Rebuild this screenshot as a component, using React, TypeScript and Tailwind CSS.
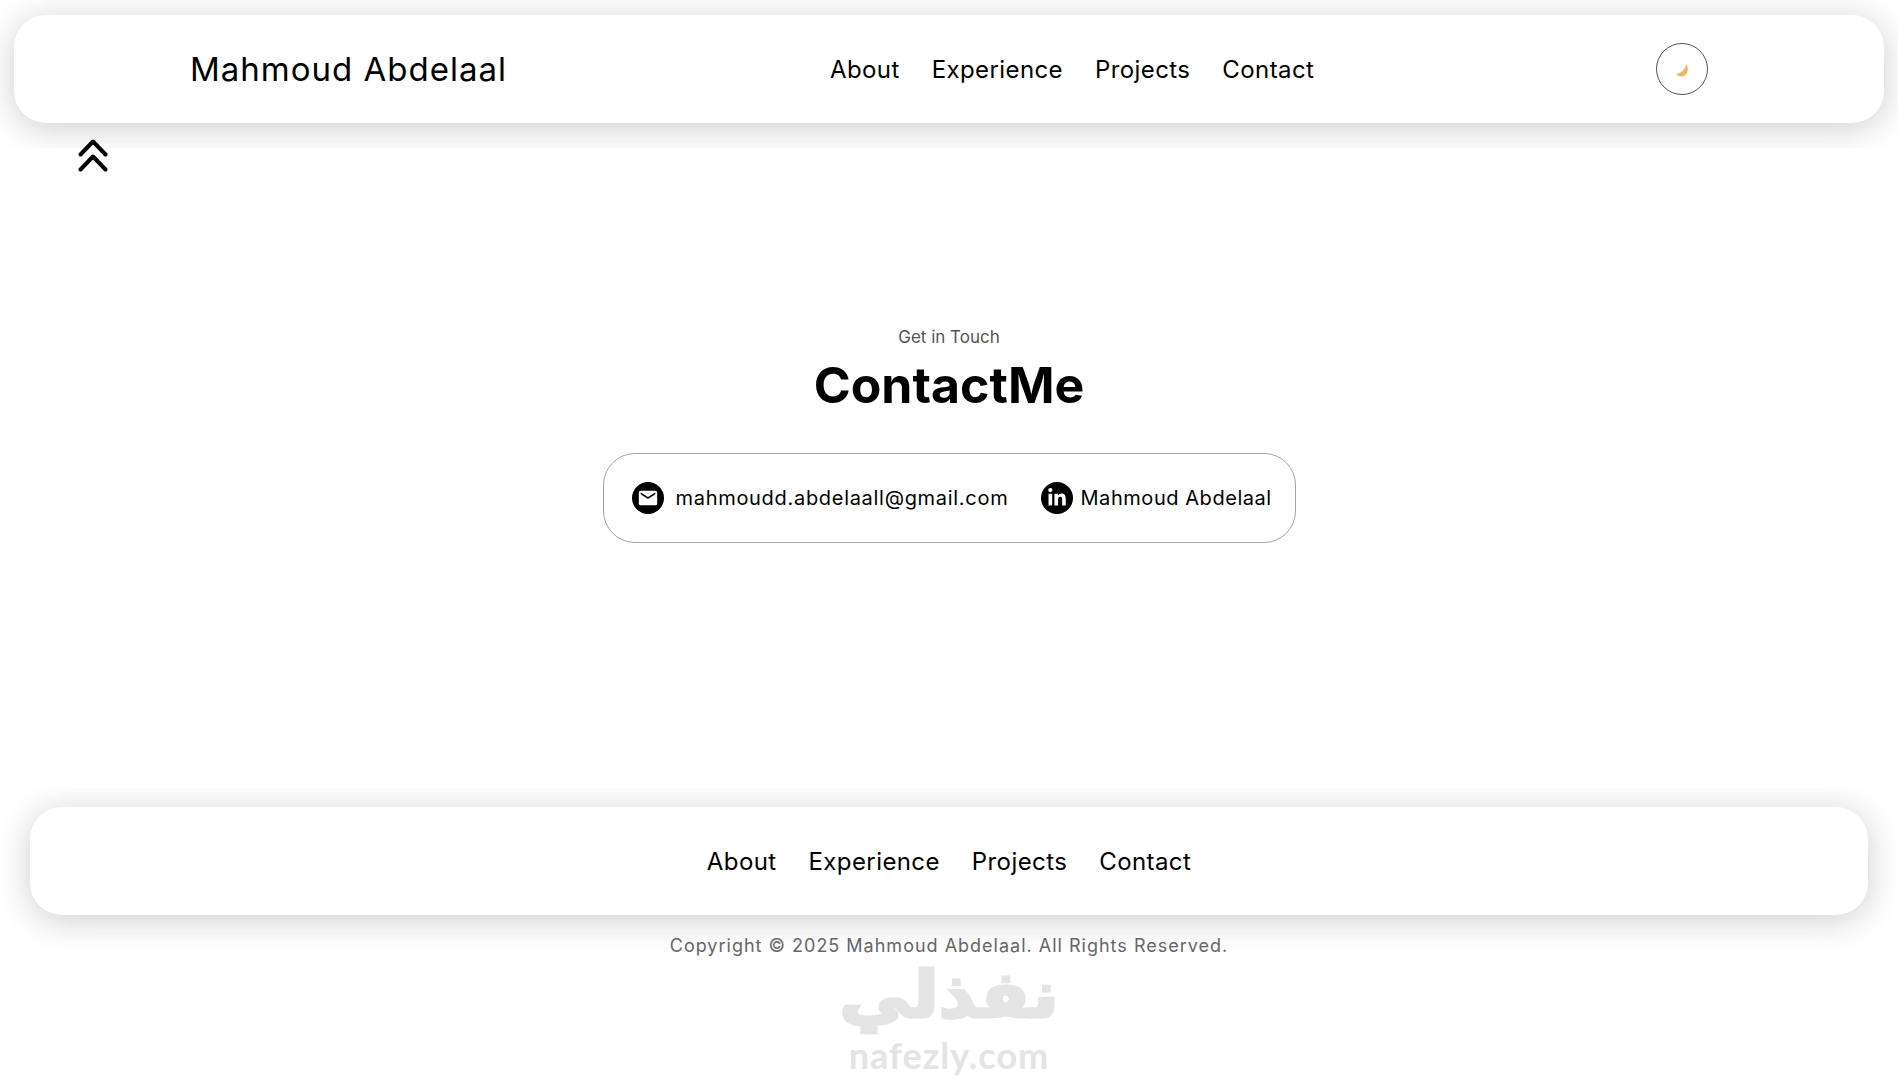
import { FaLinkedinIn } from 'react-icons/fa';
import { MdEmail } from 'react-icons/md';

const links = ['About', 'Experience', 'Projects', 'Contact'];

function NavLinks() {
  return (
    <ul className="flex items-center gap-[32px] pt-[2px] text-[24px] leading-9 text-black">
      {links.map(link => (
        <li key={link}>
          <a href="#" className="tracking-[0.4px]">{link}</a>
        </li>
      ))}
    </ul>
  );
}

export default function App() {
  return (
    <div className="relative h-[1077px] overflow-hidden bg-white font-['Inter',sans-serif] text-black">
      <header className="h-[148px] px-[14px] pt-[15px]">
        <nav className="flex h-[108px] items-center rounded-[32px] bg-white pl-[176px] pr-[176px] shadow-[0_5px_35px_rgba(0,0,0,0.2)]">
          <div className="w-[640px] pt-[2px] text-[33px] tracking-[1px]">Mahmoud Abdelaal</div>
          <NavLinks />
          <button className="ml-auto flex h-[52px] w-[52px] items-center justify-center rounded-full border border-[#555] bg-white">
            <svg width="16" height="16" viewBox="0 0 16 16" className="mt-[3px]">
              <path d="M12.500 1C15.500 6 13.500 13.500 7 13.500C5 13.500 3 12.500 2 10.500C6 10.500 10 9 12.500 1Z" fill="#f3b562" />
            </svg>
          </button>
        </nav>
      </header>

      {/* scroll to top, sits over the header shadow */}
      <a href="#" className="absolute left-[78px] top-[139px] z-10">
        <svg width="30" height="33" viewBox="0 0 30 33" fill="none" stroke="#000" strokeWidth="4" strokeLinecap="round" strokeLinejoin="round">
          <path d="M2.500 15.500 15 2.500l12.500 13" />
          <path d="M2.500 30.500 15 17.500l12.500 13" />
        </svg>
      </a>

      <main className="relative flex h-[640px] flex-col items-center bg-white pt-[178px]">
        <p className="text-[17px] leading-[22px] text-[#555]">Get in Touch</p>
        <h1 className="mt-[5px] text-[50px] font-bold leading-[64px]">ContactMe</h1>
        <div className="mt-[36px] flex h-[90px] w-[693px] items-center rounded-[32px] border border-[#a3a3a3] pl-[28px]">
          <span className="flex h-8 w-8 items-center justify-center rounded-full bg-black text-white">
            <MdEmail size={22} />
          </span>
          <a href="#" className="ml-3 w-[365px] text-[20px] tracking-[0.7px]">mahmoudd.abdelaall@gmail.com</a>
          <span className="flex h-8 w-8 items-center justify-center rounded-full bg-black text-white">
            <FaLinkedinIn size={20} />
          </span>
          <a href="#" className="ml-2 text-[20px] tracking-[0.55px]">Mahmoud Abdelaal</a>
        </div>
      </main>

      <footer className="px-[30px] pt-[19px]">
        <nav className="flex h-[108px] items-center justify-center rounded-[32px] bg-white shadow-[0_5px_35px_rgba(0,0,0,0.2)]">
          <NavLinks />
        </nav>
        <p className="mt-[19px] text-center text-[18px] leading-[24px] tracking-[1px] text-[#666]">
          Copyright © 2025 Mahmoud Abdelaal. All Rights Reserved.
        </p>
      </footer>

      {/* watermark */}
      <div className="absolute bottom-0 left-[843px] flex w-[212px] flex-col items-center text-[#e4e4e4]">
        <span dir="rtl" className="scale-x-[1.12] font-['DejaVu_Sans',sans-serif] text-[64px] font-bold leading-[75px] [-webkit-text-stroke:3px_#e4e4e4]">نفذلي</span>
        <span className="font-['Lato',sans-serif] text-[36px] font-bold leading-[44px] tracking-[1px]">nafezly.com</span>
      </div>
    </div>
  );
}
